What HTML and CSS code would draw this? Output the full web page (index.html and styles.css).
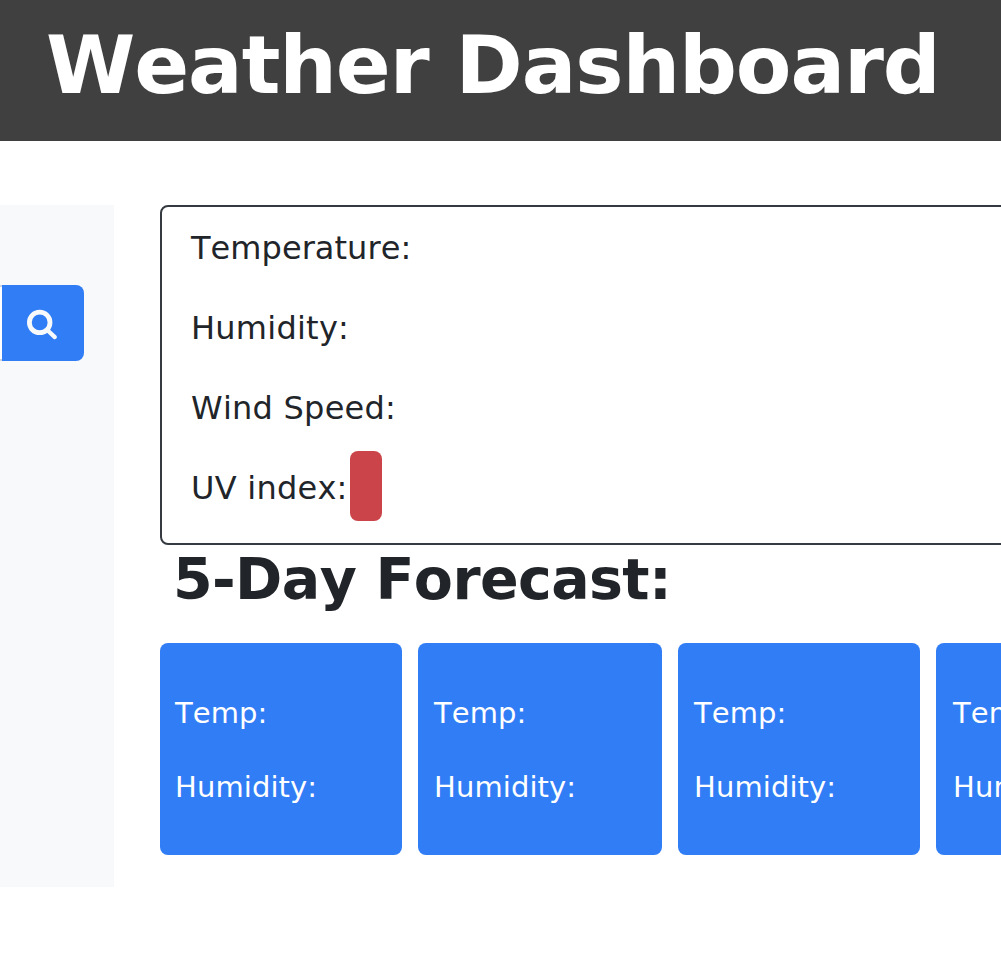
FILE: index.html
```html
<!DOCTYPE html>
<html lang="en">
<head>
<meta charset="utf-8">
<title>Weather Dashboard</title>
<link rel="stylesheet" href="styles.css">
</head>
<body>
<header class="header"><h1>Weather Dashboard</h1></header>
<div class="layout">
  <aside class="sidebar">
    <div class="field"></div>
    <button class="search" aria-label="Search">
      <svg width="32" height="32" viewBox="0 0 32 32"><circle cx="12.7" cy="15.4" r="10.3"/><path class="handle" d="M20.5 23.2 L27.8 30.1"/></svg>
    </button>
  </aside>
  <main class="main">
    <section class="current">
      <p class="temperature">Temperature:</p>
      <p>Humidity:</p>
      <p>Wind Speed:</p>
      <p><span>UV index:</span><span class="badge"></span></p>
    </section>
    <h2>5-Day Forecast:</h2>
    <section class="forecast">
      <article class="card"><p>Temp:</p><p>Humidity:</p></article>
      <article class="card"><p>Temp:</p><p>Humidity:</p></article>
      <article class="card"><p>Temp:</p><p>Humidity:</p></article>
      <article class="card"><p>Temp:</p><p>Humidity:</p></article>
    </section>
  </main>
</div>
</body>
</html>
```

FILE: styles.css
```css
* { box-sizing: border-box; }
body { margin: 0; height: 956px; overflow: hidden; background: #fff; color: #212529; font-family: Verdana, "DejaVu Sans", sans-serif; font-kerning: none; }
h1, h2, p { margin: 0; white-space: nowrap; }
.header { height: 141px; padding: 17px 0 0 46px; background: #404040; color: #fff; }
h1 { font-size: 81px; line-height: 96px; font-weight: 700; letter-spacing: -1.1px; }
.layout { display: flex; margin-top: 64px; overflow: hidden; }
.sidebar { display: flex; flex: 0 0 114px; height: 682px; padding-top: 80px; background: #f8f9fa; }
.field { width: 2px; height: 76px; border: solid #ced4da; border-width: 2px 0; background: #fff; }
.search { display: flex; align-items: center; justify-content: center; width: 82px; height: 76px; padding: 0; border: 0; border-radius: 0 8px 8px 0; background: #307df6; }
.search svg { overflow: visible; fill: none; stroke: #f8f9fa; stroke-width: 4.8; stroke-linecap: round; }
.search .handle { stroke-width: 4.2; }
.main { flex: 0 0 1020px; margin-left: 46px; }
.current { height: 340px; padding: 0 0 0 29px; border: 2px solid #343a40; border-radius: 8px; }
.current p { display: flex; align-items: center; height: 80px; padding-top: 1px; font-size: 32px; letter-spacing: 0.25px; }
.current .temperature { letter-spacing: 0.05px; }
.badge { width: 32px; height: 70px; margin: -3px 0 0 2.4px; border-radius: 8px; background: #cb444a; }
h2 { height: 98px; padding: 1px 0 0 13px; font-size: 57px; line-height: 67px; letter-spacing: -0.6px; }
.forecast { display: grid; grid-template-columns: 242px 244px 242px 244px; gap: 16px; }
.card { height: 212px; padding: 33px 16px; border-radius: 8px; background: #307df6; color: #fff; font-size: 29px; letter-spacing: 0.1px; }
.card:first-child { padding-left: 15px; }
.card:last-child { padding-left: 17px; }
.card p { height: 74px; line-height: 74px; }
```
